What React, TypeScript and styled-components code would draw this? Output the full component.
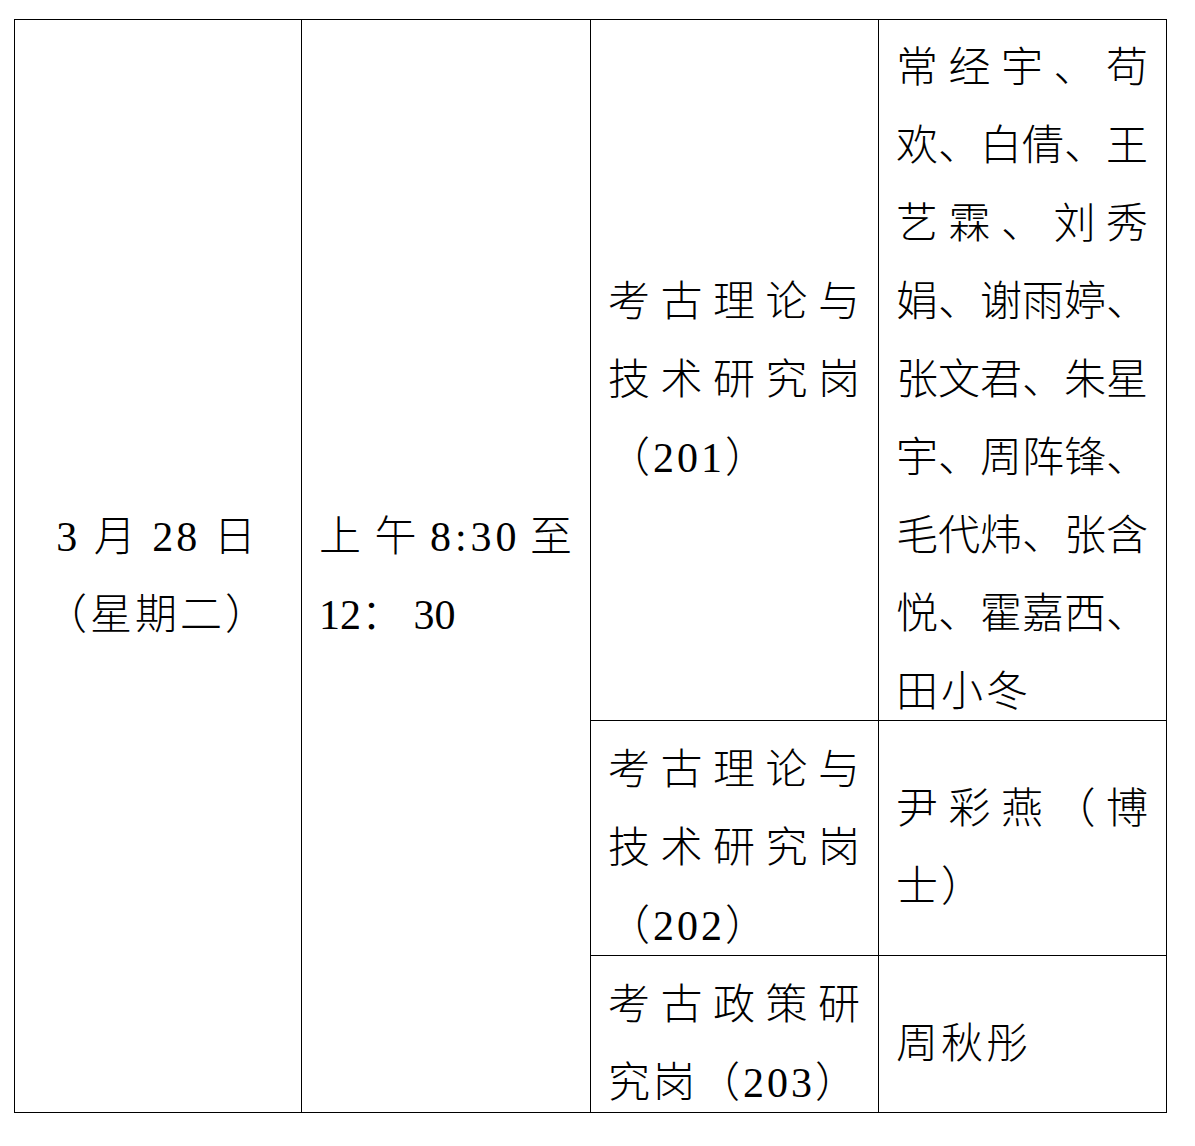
import styled, { createGlobalStyle } from 'styled-components';

const GlobalStyle = createGlobalStyle`
  html, body {
    margin: 0;
    padding: 0;
    background: #ffffff;
  }
  * {
    box-sizing: border-box;
  }
`;

const colors = {
  ink: '#000000',
  rule: '#000000',
  page: '#ffffff',
};

const Page = styled.div`
  background: ${colors.page};
  padding: 19px 0 0 14px;
  min-height: 1146px;
`;

const Table = styled.div`
  display: grid;
  grid-template-columns: 287px 289px 288px 288px;
  grid-template-rows: 701px 235px 157px;
  width: 1153px;
  border-left: 1px solid ${colors.rule};
  border-top: 1px solid ${colors.rule};
  font-family: 'Liberation Serif', 'Noto Sans CJK SC', serif;
  font-weight: 300;
  font-size: 42px;
  line-height: 78px;
  color: ${colors.ink};
`;

const Cell = styled.div<{ $span?: boolean; $center?: boolean; $col?: number }>`
  grid-row: ${(props) => (props.$span ? '1 / 4' : 'auto')};
  grid-column: ${(props) => props.$col ?? 'auto'};
  display: flex;
  flex-direction: column;
  justify-content: center;
  align-items: ${(props) => (props.$center ? 'center' : 'stretch')};
  padding: 20px 18px 0 17px;
  border-right: 1px solid ${colors.rule};
  border-bottom: 1px solid ${colors.rule};
  min-width: 0;
  white-space: nowrap;
`;

const Line = styled.div<{ $justify?: boolean; $tight?: boolean }>`
  display: flex;
  justify-content: ${(props) => (props.$justify ? 'space-between' : 'flex-start')};
  letter-spacing: ${(props) => (props.$justify || props.$tight ? '0' : '3px')};
  height: 78px;
  white-space: pre;
`;

const Token = styled.span`
  display: block;
  letter-spacing: 4px;
  margin-right: -4px;
`;

const CenterLine = styled.div`
  letter-spacing: 3px;
  height: 78px;
  white-space: pre;
`;

type TextLine = { text: string; justify?: boolean; tight?: boolean };

const tokenize = (s: string): string[] => s.match(/[0-9:]+|\S/g) ?? [];

function Lines({ lines }: { lines: TextLine[] }) {
  return (
    <>
      {lines.map((line, i) => (
        <Line key={i} $justify={line.justify} $tight={line.tight}>
          {line.justify
            ? tokenize(line.text).map((tok, j) => <Token key={j}>{tok}</Token>)
            : line.text}
        </Line>
      ))}
    </>
  );
}

const positions: { post: TextLine[]; names: TextLine[] }[] = [
  {
    post: [
      { text: '考古理论与', justify: true },
      { text: '技术研究岗', justify: true },
      { text: '（201）' },
    ],
    names: [
      { text: '常经宇、苟', justify: true },
      { text: '欢、白倩、王', justify: true },
      { text: '艺霖、刘秀', justify: true },
      { text: '娟、谢雨婷、', justify: true },
      { text: '张文君、朱星', justify: true },
      { text: '宇、周阵锋、', justify: true },
      { text: '毛代炜、张含', justify: true },
      { text: '悦、霍嘉西、', justify: true },
      { text: '田小冬' },
    ],
  },
  {
    post: [
      { text: '考古理论与', justify: true },
      { text: '技术研究岗', justify: true },
      { text: '（202）' },
    ],
    names: [
      { text: '尹彩燕（博', justify: true },
      { text: '士）' },
    ],
  },
  {
    post: [
      { text: '考古政策研', justify: true },
      { text: '究岗（203）' },
    ],
    names: [{ text: '周秋彤' }],
  },
];

export default function App() {
  return (
    <Page>
      <GlobalStyle />
      <Table>
        <Cell $span $center>
          <CenterLine>3 月 28 日</CenterLine>
          <CenterLine>（星期二）</CenterLine>
        </Cell>
        <Cell $span>
          <Lines
            lines={[
              { text: '上午 8:30 至', justify: true },
              { text: '12： 30', tight: true },
            ]}
          />
        </Cell>
        {positions.flatMap((row, i) => [
          <Cell key={`post-${i}`} $col={3}>
            <Lines lines={row.post} />
          </Cell>,
          <Cell key={`names-${i}`} $col={4}>
            <Lines lines={row.names} />
          </Cell>,
        ])}
      </Table>
    </Page>
  );
}
